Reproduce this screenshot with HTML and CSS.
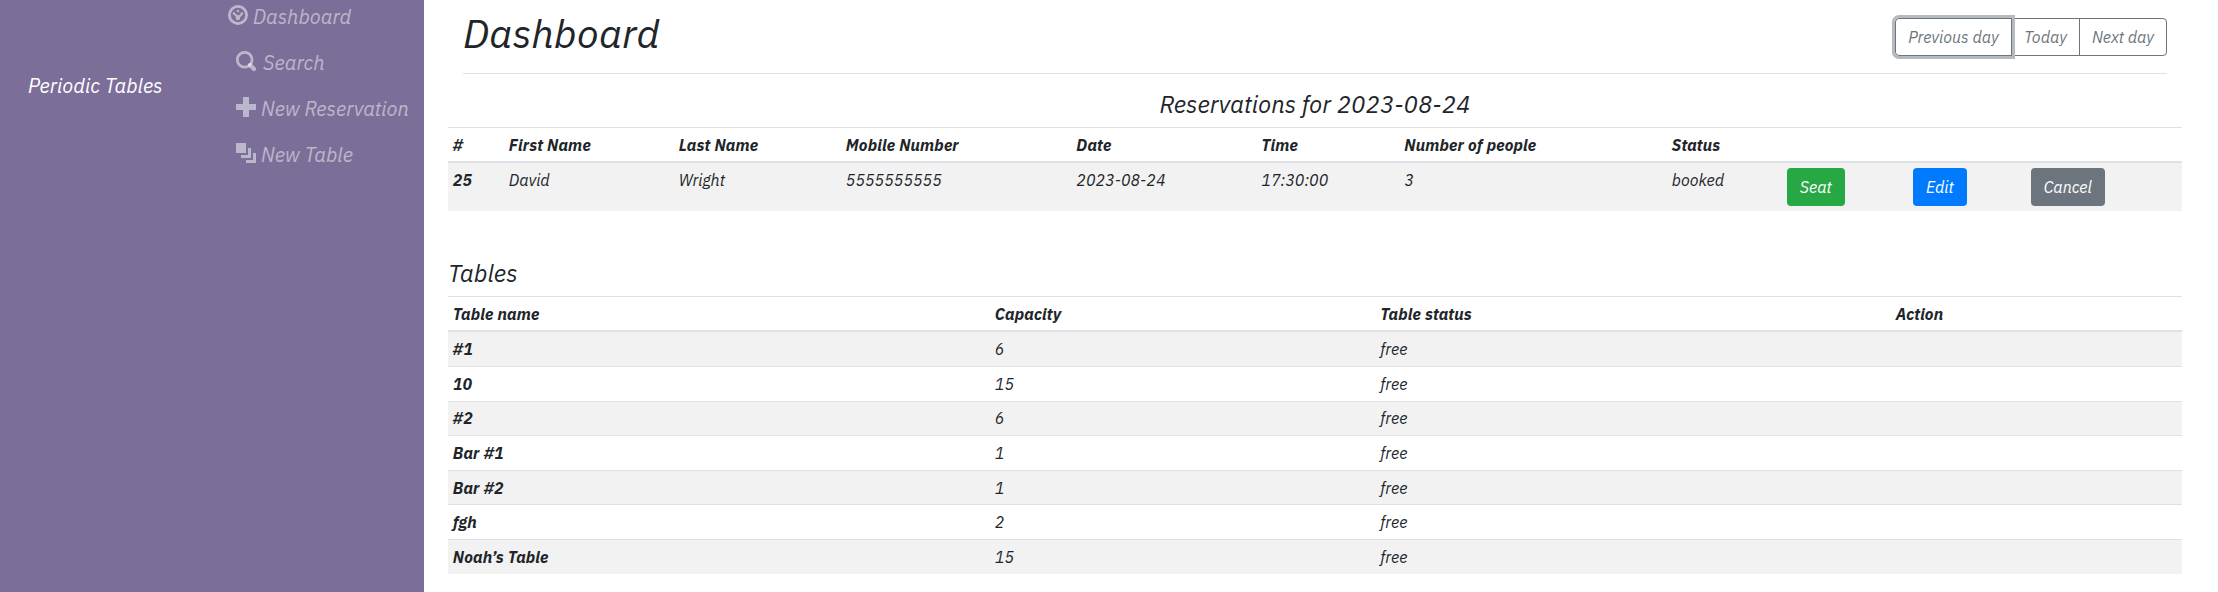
FILE: index.html
```
<!DOCTYPE html>
<html lang="en">
<head>
<meta charset="utf-8">
<title>Periodic Tables</title>
<link rel="stylesheet" href="styles.css">
</head>
<body>
<div class="layout">
  <nav class="sidebar">
    <a class="brand">Periodic Tables</a>
    <ul class="menu">
      <li class="menu-first"><svg class="icon" viewBox="0 0 20 20"><circle cx="10" cy="10" r="8.6" fill="none" stroke="currentColor" stroke-width="2.8"/><path fill="currentColor" d="M10 4.7a1.3 1.3 0 1 1 0 2.6 1.3 1.3 0 0 1 0-2.6zM6 7a1.4 1.4 0 0 1 1.4 1.7l2.3 1.6h1.2l1.6-1.5A1.4 1.4 0 1 1 14.3 10l-2.2 2.2a2.3 2.3 0 1 1-4.2-.4L6.2 9.9A1.45 1.45 0 0 1 6 7z"/></svg><span>Dashboard</span></li>
      <li><svg class="icon" viewBox="0 0 20 20"><circle cx="8.7" cy="8.7" r="7.4" fill="none" stroke="currentColor" stroke-width="2.7"/><path d="M14 14l4 4" stroke="currentColor" stroke-width="4.2" stroke-linecap="round"/></svg><span class="wide-gap">Search</span></li>
      <li><svg class="icon" viewBox="0 0 20 20"><path fill="currentColor" d="M7 0h6v7h7v6h-7v7H7v-7H0V7h7z"/></svg><span>New Reservation</span></li>
      <li><svg class="icon" viewBox="0 0 20 20"><path fill="currentColor" d="M0 0h10v10H0zM12 5h3v10H5v-3h7zM17 10h3v10H10v-3h7z"/></svg><span>New Table</span></li>
    </ul>
  </nav>
  <main class="content">
    <header class="page-header">
      <h1>Dashboard</h1>
      <div class="btn-group">
        <button class="btn btn-outline prev focused">Previous day</button>
        <button class="btn btn-outline today">Today</button>
        <button class="btn btn-outline next">Next day</button>
      </div>
    </header>
    <h4 class="centered">Reservations for 2023-08-24</h4>
    <table class="table reservations">
      <colgroup><col class="c-id"><col class="c-first"><col class="c-last"><col class="c-mobile"><col class="c-date"><col class="c-time"><col class="c-people"><col class="c-status"><col class="c-seat"><col class="c-edit"><col></colgroup>
      <thead><tr><th>#</th><th>First Name</th><th>Last Name</th><th>Mobile Number</th><th>Date</th><th>Time</th><th>Number of people</th><th>Status</th><th></th><th></th><th></th></tr></thead>
      <tbody><tr><th>25</th><td>David</td><td>Wright</td><td>5555555555</td><td>2023-08-24</td><td>17:30:00</td><td>3</td><td>booked</td>
        <td><button class="btn btn-seat">Seat</button></td><td><button class="btn btn-edit">Edit</button></td><td><button class="btn btn-cancel">Cancel</button></td></tr></tbody>
    </table>
    <h4>Tables</h4>
    <table class="table">
      <colgroup><col class="t-name"><col class="t-capacity"><col class="t-status"><col></colgroup>
      <thead><tr><th>Table name</th><th>Capacity</th><th>Table status</th><th>Action</th></tr></thead>
      <tbody>
        <tr><th>#1</th><td>6</td><td>free</td><td></td></tr>
        <tr><th>10</th><td>15</td><td>free</td><td></td></tr>
        <tr><th>#2</th><td>6</td><td>free</td><td></td></tr>
        <tr><th>Bar #1</th><td>1</td><td>free</td><td></td></tr>
        <tr><th>Bar #2</th><td>1</td><td>free</td><td></td></tr>
        <tr><th>fgh</th><td>2</td><td>free</td><td></td></tr>
        <tr><th>Noah’s Table</th><td>15</td><td>free</td><td></td></tr>
      </tbody>
    </table>
  </main>
</div>
</body>
</html>
```
FILE: styles.css
```
*, *::before, *::after { box-sizing: border-box; }
body {
  margin: 0;
  font: italic 400 16px/1.5 "IBM Plex Sans", "Open Sans", "Noto Sans", sans-serif;
  color: #212529;
  background: #fff;
}
.layout { display: flex; height: 592px; overflow: hidden; }

.sidebar {
  flex: none;
  display: flex;
  width: 424px;
  padding-left: 28px;
  background: #7b6e98;
  font-size: 20px;
  line-height: 30px;
}
.brand { width: 200px; padding-top: 71px; color: #fff; }
.menu { list-style: none; margin: 0; padding: 2px 0 0; color: rgba(255, 255, 255, .5); }
.menu li { display: flex; height: 46px; padding-left: 8px; white-space: nowrap; }
.menu .menu-first { padding-left: 0; }
.menu span { margin-left: 5px; }
.menu .wide-gap { margin-left: 7px; }
.icon { width: 20px; height: 20px; margin-top: 3px; }

.content { flex: 1; padding: 9px 36px 0 24px; }
.page-header {
  display: flex;
  justify-content: space-between;
  align-items: flex-start;
  height: 65px;
  margin: 0 15px 16px;
  border-bottom: 1px solid #dee2e6;
}
h1, h4 { margin: 0 0 8px; font-weight: 400; line-height: 1.2; }
h1 { font-size: 40px; }
h4 { font-size: 24px; }
.centered { text-align: center; }

.btn {
  height: 38px;
  padding: 6px 12px;
  border: 1px solid transparent;
  border-radius: 4px;
  font: inherit;
  color: #fff;
  white-space: nowrap;
}
.btn-group { display: flex; margin-top: 9px; }
.btn-outline { margin-left: -1px; padding: 6px 0; background: transparent; border-color: #6c757d; color: #6c757d; }
.prev { width: 117px; border-radius: 4px 0 0 4px; }
.today { width: 69px; border-radius: 0; }
.next { width: 88px; border-radius: 0 4px 4px 0; }
.focused { position: relative; z-index: 1; box-shadow: 0 0 0 3px #b5babe; }
.btn-seat { width: 58px; background: #28a745; }
.btn-edit { width: 54px; background: #007bff; }
.btn-cancel { width: 74px; background: #6c757d; }

.table { width: 1734px; table-layout: fixed; border-collapse: collapse; }
.table th, .table td {
  padding: 4.8px;
  border-top: 1px solid #dee2e6;
  text-align: left;
  vertical-align: top;
}
.table th { font-weight: 700; letter-spacing: .22px; }
.table thead th { border-bottom: 2px solid #dee2e6; vertical-align: bottom; }
.table tbody tr:nth-child(odd) { background: rgba(0, 0, 0, .05); }
.reservations { margin-bottom: 48px; }

.c-id { width: 56px; }
.c-first { width: 170px; }
.c-last { width: 167px; }
.c-mobile { width: 230.5px; }
.c-date { width: 185px; }
.c-time { width: 143px; }
.c-people { width: 267.5px; }
.c-status { width: 115px; }
.c-seat { width: 126px; }
.c-edit { width: 118px; }
.t-name { width: 542px; }
.t-capacity { width: 385.5px; }
.t-status { width: 515.5px; }
```
